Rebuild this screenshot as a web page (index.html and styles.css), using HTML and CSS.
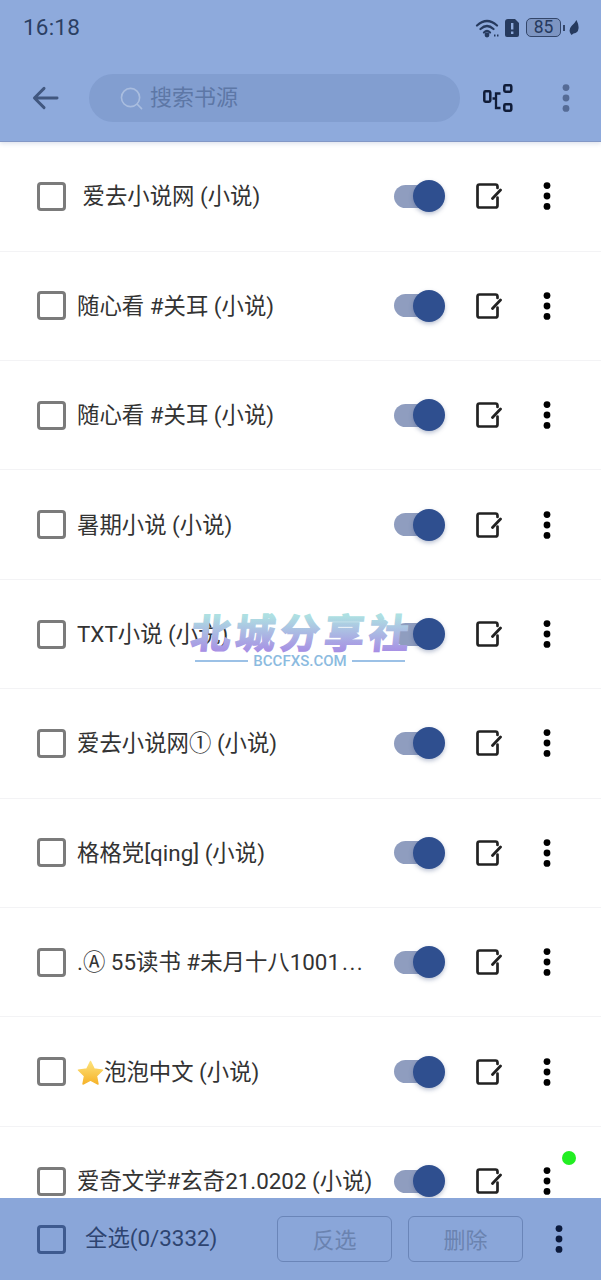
FILE: index.html
```html
<!DOCTYPE html>
<html lang="zh">
<head>
<meta charset="utf-8">
<title>书源管理</title>
<link rel="stylesheet" href="styles.css">
</head>
<body>
<svg class="defs" width="0" height="0" aria-hidden="true">
  <symbol id="edit" viewBox="0 0 26 26">
    <path d="M21.500 5V3.500Q21.500 1.500 19.500 1.500H3.500Q1.500 1.500 1.500 3.500V22.500Q1.500 24.500 3.500 24.500H19.500Q21.500 24.500 21.500 22.500V14.500" fill="none" stroke="currentColor" stroke-width="2.700" stroke-linecap="round" stroke-linejoin="round"/>
    <path d="M16.500 15.500 24.500 7" fill="none" stroke="currentColor" stroke-width="2.800" stroke-linecap="round"/>
  </symbol>
  <symbol id="dots" viewBox="0 0 8 28">
    <circle cx="4" cy="3.600" r="3.400" fill="currentColor"/>
    <circle cx="4" cy="14" r="3.400" fill="currentColor"/>
    <circle cx="4" cy="24.400" r="3.400" fill="currentColor"/>
  </symbol>
</svg>
<div class="page">
  <header class="top">
    <div class="status">
      <span class="clock">16:18</span>
      <div class="status-icons">
        <svg class="ic-wifi" viewBox="0 0 25 20"><path d="M2 7.500Q12 -1.500 22 7.500M5.500 11Q12 5 18.500 11M9 14.500Q12 11.500 15 14.500" fill="none" stroke="currentColor" stroke-width="2.200" stroke-linecap="round"/><circle cx="12" cy="17" r="2.400" fill="currentColor"/><path d="M19 16.500h1.500v2H19zM22 16.500h1.500v2H22z" fill="currentColor"/></svg>
        <svg class="ic-sim" viewBox="0 0 14 18"><path d="M3 0H10L14 4V16Q14 18 12 18H2Q0 18 0 16V3Q0 0 3 0Z" fill="currentColor"/><rect x="6" y="4" width="2.400" height="6.500" fill="#8eaadc"/><rect x="6" y="12.500" width="2.400" height="2.500" fill="#8eaadc"/></svg>
        <span class="battery">85</span>
        <span class="battery-tip"></span>
        <svg class="ic-leaf" viewBox="0 0 10 15"><path d="M7.500 0Q10 5 9.500 8.500Q9 13 4.500 13.500L2.500 15L1.800 14Q-1 10 2.500 6Q5.500 3.500 7.500 0Z" fill="currentColor"/></svg>
      </div>
    </div>
    <div class="toolbar">
      <svg class="ic-back" viewBox="0 0 28 24"><path d="M26 12H3M12.500 2 2.500 12l10 10" fill="none" stroke="currentColor" stroke-width="3" stroke-linecap="round" stroke-linejoin="round"/></svg>
      <div class="search">
        <svg class="ic-search" viewBox="0 0 24 24"><circle cx="11" cy="11" r="9.500" fill="none" stroke="currentColor" stroke-width="1.700"/><path d="M18 18l4.500 4.500" stroke="currentColor" stroke-width="1.700" stroke-linecap="round"/></svg>
        <span class="placeholder">搜索书源</span>
      </div>
      <svg class="ic-tree" viewBox="0 0 32 30"><rect x="1.300" y="8.300" width="6" height="10.500" rx="1.200" fill="none" stroke="currentColor" stroke-width="2.500"/><rect x="21.300" y="2.300" width="7" height="6.500" rx="1.200" fill="none" stroke="currentColor" stroke-width="2.500"/><rect x="21.300" y="21.300" width="7" height="6.500" rx="1.200" fill="none" stroke="currentColor" stroke-width="2.500"/><path d="M17.500 10.500H13V25H17.500M9.500 15.500H13" fill="none" stroke="currentColor" stroke-width="2.300"/></svg>
      <svg class="ic-dots head-dots"><use href="#dots"/></svg>
    </div>
  </header>

  <main class="list">
    <div class="row">
      <span class="check"></span>
      <span class="name">&nbsp;爱去小说网 (小说)</span>
      <span class="switch"><span class="thumb"></span></span>
      <svg class="ic-edit"><use href="#edit"/></svg>
      <svg class="ic-dots"><use href="#dots"/></svg>
    </div>
    <div class="row">
      <span class="check"></span>
      <span class="name">随心看 #关耳 (小说)</span>
      <span class="switch"><span class="thumb"></span></span>
      <svg class="ic-edit"><use href="#edit"/></svg>
      <svg class="ic-dots"><use href="#dots"/></svg>
    </div>
    <div class="row">
      <span class="check"></span>
      <span class="name">随心看 #关耳 (小说)</span>
      <span class="switch"><span class="thumb"></span></span>
      <svg class="ic-edit"><use href="#edit"/></svg>
      <svg class="ic-dots"><use href="#dots"/></svg>
    </div>
    <div class="row">
      <span class="check"></span>
      <span class="name">暑期小说 (小说)</span>
      <span class="switch"><span class="thumb"></span></span>
      <svg class="ic-edit"><use href="#edit"/></svg>
      <svg class="ic-dots"><use href="#dots"/></svg>
    </div>
    <div class="row">
      <span class="check"></span>
      <span class="name">TXT小说 (小说)</span>
      <span class="switch"><span class="thumb"></span></span>
      <svg class="ic-edit"><use href="#edit"/></svg>
      <svg class="ic-dots"><use href="#dots"/></svg>
    </div>
    <div class="row">
      <span class="check"></span>
      <span class="name">爱去小说网① (小说)</span>
      <span class="switch"><span class="thumb"></span></span>
      <svg class="ic-edit"><use href="#edit"/></svg>
      <svg class="ic-dots"><use href="#dots"/></svg>
    </div>
    <div class="row">
      <span class="check"></span>
      <span class="name">格格党[qing] (小说)</span>
      <span class="switch"><span class="thumb"></span></span>
      <svg class="ic-edit"><use href="#edit"/></svg>
      <svg class="ic-dots"><use href="#dots"/></svg>
    </div>
    <div class="row">
      <span class="check"></span>
      <span class="name">.Ⓐ 55读书 #未月十八1001<span class="more">...</span></span>
      <span class="switch"><span class="thumb"></span></span>
      <svg class="ic-edit"><use href="#edit"/></svg>
      <svg class="ic-dots"><use href="#dots"/></svg>
    </div>
    <div class="row">
      <span class="check"></span>
      <span class="name"><svg class="ic-star" viewBox="0 0 28 26"><defs><linearGradient id="star" x1="0" y1="0" x2="0" y2="1"><stop offset="0" stop-color="#fde27a"/><stop offset="1" stop-color="#f6b32a"/></linearGradient></defs><path d="M14 1.500 17.800 9.300 26.500 10.500 20.200 16.500 21.800 25 14 20.900 6.200 25 7.800 16.500 1.500 10.500 10.200 9.300Z" fill="url(#star)" stroke="url(#star)" stroke-width="1.500" stroke-linejoin="round"/></svg>泡泡中文 (小说)</span>
      <span class="switch"><span class="thumb"></span></span>
      <svg class="ic-edit"><use href="#edit"/></svg>
      <svg class="ic-dots"><use href="#dots"/></svg>
    </div>
    <div class="row">
      <span class="check"></span>
      <span class="name">爱奇文学#玄奇21.0202 (小说)</span>
      <span class="switch"><span class="thumb"></span></span>
      <svg class="ic-edit"><use href="#edit"/></svg>
      <svg class="ic-dots"><use href="#dots"/></svg>
    </div>
  </main>

  <footer class="bottom">
    <span class="check check-all"></span>
    <span class="all-label">全选(0/3332)</span>
    <span class="btn">反选</span>
    <span class="btn">删除</span>
    <svg class="ic-dots bottom-dots"><use href="#dots"/></svg>
  </footer>

  <span class="green-dot"></span>
  <div class="watermark">
    <svg class="wm-title" viewBox="0 0 232 46">
      <defs><linearGradient id="wm" gradientUnits="userSpaceOnUse" x1="0" y1="6" x2="0" y2="42"><stop offset="0" stop-color="#aee0e2"/><stop offset="1" stop-color="#a78ee4"/></linearGradient></defs>
      <text class="wm-text" x="6" y="38" fill="url(#wm)" stroke="url(#wm)">北城分享社</text>
    </svg>
    <div class="wm-sub"><span class="wm-line"></span><span class="wm-url">BCCFXS.COM</span><span class="wm-line"></span></div>
  </div>
</div>
</body>
</html>
```

FILE: styles.css
```css
* { box-sizing: border-box; }
html, body { margin: 0; padding: 0; background: #fff; }
body { font-family: Roboto, "Noto Sans CJK SC", sans-serif; }
.defs { position: absolute; }
.page {
  position: relative;
  width: 601px;
  height: 1280px;
  overflow: hidden;
  display: flex;
  flex-direction: column;
}

/* header */
.top {
  height: 142px;
  flex: none;
  background: #8eaadc;
  border-bottom: 1px solid #8398c6;
  box-shadow: 0 2px 4px rgba(90, 110, 160, .18);
  position: relative;
  z-index: 1;
  display: flex;
  flex-direction: column;
}
.status {
  height: 54px;
  flex: none;
  display: flex;
  align-items: center;
  justify-content: space-between;
  padding: 1px 22px 0 23px;
  color: #2b3f63;
}
.clock { font-size: 22.500px; letter-spacing: .2px; line-height: 1; }
.status-icons { display: flex; align-items: center; color: #263a5e; }
.ic-wifi { width: 25px; height: 20px; margin-right: 5px; }
.ic-sim { width: 14px; height: 18px; margin-right: 7px; }
.battery {
  width: 35px;
  height: 19px;
  border: 1.500px solid #33466a;
  border-radius: 5px;
  background: #7d95c2;
  font-size: 17.500px;
  line-height: 16px;
  text-align: center;
  color: #263a5e;
}
.battery-tip { width: 2px; height: 6px; background: #33466a; margin: 0 4px 0 2px; }
.ic-leaf { width: 10px; height: 15px; }

.toolbar {
  flex: 1;
  display: flex;
  align-items: center;
  padding: 1px 32px 0 32px;
}
.ic-back { width: 27px; height: 24px; color: #41577f; flex: none; margin-right: 30px; }
.search {
  width: 371px;
  height: 48px;
  border-radius: 24px;
  background: #829ed0;
  display: flex;
  align-items: center;
  padding-left: 31px;
  flex: none;
}
.ic-search { width: 23px; height: 23px; color: #a9bddf; margin-right: 7px; }
.placeholder { font-size: 22px; color: #5d77a6; line-height: 1; }
.ic-tree { width: 32px; height: 30px; color: #101c38; flex: none; margin-left: 23px; }
.ic-dots { width: 8px; height: 28px; flex: none; color: #000; }
.head-dots { color: #556b96; margin-left: 47px; }

/* list */
.list { flex: 1; overflow: hidden; min-height: 0; padding-top: .3px; }
.row {
  height: 109.400px;
  display: flex;
  align-items: center;
  padding-left: 37px;
  border-bottom: 1px solid #f3f3f5;
}
.check {
  width: 29px;
  height: 29px;
  flex: none;
  border: 3.500px solid #7b7b7b;
  border-radius: 4px;
  margin-right: 11px;
}
.name {
  width: 300px;
  flex: none;
  margin-right: 17px;
  font-size: 22.400px;
  line-height: 30px;
  color: #333;
  white-space: nowrap;
  overflow: hidden;
}
.more { letter-spacing: 1.500px; margin-left: 2px; }
.ic-star { width: 27px; height: 25px; vertical-align: -5px; }
.switch {
  width: 51px;
  height: 23px;
  flex: none;
  border-radius: 12px 0 0 12px;
  background: linear-gradient(to right, #8f9dbf 0, #8f9dbf 40px, transparent 40px);
  position: relative;
  margin-right: 31px;
}
.thumb {
  position: absolute;
  right: 0;
  top: -4.500px;
  width: 32px;
  height: 32px;
  border-radius: 50%;
  background: #2f4f8f;
  box-shadow: 0 2px 4px rgba(60, 80, 130, .35);
}
.ic-edit { width: 26px; height: 26px; flex: none; color: #222; margin-right: 41px; }

/* bottom */
.bottom {
  height: 82px;
  flex: none;
  background: #8aa6d9;
  display: flex;
  align-items: center;
  padding-left: 37px;
  position: relative;
  z-index: 1;
}
.check-all { border-color: #3e5a8f; margin-right: 19px; }
.all-label { font-size: 22.400px; line-height: 30px; padding-bottom: 2px; color: #2e4470; width: 192px; flex: none; white-space: nowrap; }
.btn {
  width: 115px;
  height: 46px;
  flex: none;
  border: 1.500px solid #6a85b8;
  border-radius: 6px;
  margin-right: 16px;
  padding-bottom: 2px;
  display: flex;
  align-items: center;
  justify-content: center;
  font-size: 22px;
  color: #6a83b0;
}
.bottom-dots { margin-left: 16px; color: #0c1a3c; }

/* overlays */
.green-dot {
  position: absolute;
  left: 562px;
  top: 1151px;
  width: 14px;
  height: 14px;
  border-radius: 50%;
  background: #22ee22;
  z-index: 2;
}
.watermark {
  position: absolute;
  left: 185px;
  top: 610px;
  width: 232px;
  z-index: 3;
  pointer-events: none;
}
.wm-title { display: block; width: 232px; height: 46px; transform: skewX(-6deg); overflow: visible; }
.wm-text {
  font-family: "Noto Sans CJK SC", sans-serif;
  font-weight: 700;
  font-size: 40px;
  letter-spacing: 4.500px;
  stroke-width: 1.400px;
}
.wm-sub { display: flex; align-items: center; justify-content: center; gap: 5px; margin-top: -4px; padding: 0 12px 0 10px; }
.wm-line { flex: 1; height: 1.500px; background: #9cc1e6; }
.wm-url { font-size: 15px; line-height: 18px; color: #8cbbe0; font-weight: 500; }
```
